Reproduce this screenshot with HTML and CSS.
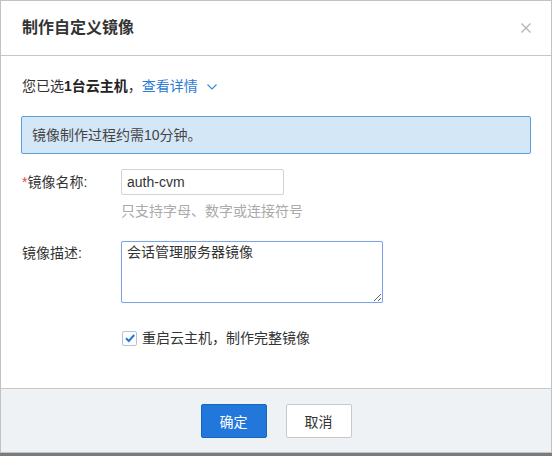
FILE: index.html
```html
<!DOCTYPE html>
<html lang="zh-CN">
<head>
<meta charset="utf-8">
<title>制作自定义镜像</title>
<link rel="stylesheet" href="styles.css">
</head>
<body>
<div class="dialog">
  <div class="header">
    <h1 class="title">制作自定义镜像</h1>
    <span class="close" aria-label="关闭">
      <svg width="10" height="10" viewBox="0 0 10 10"><path d="M0.5 0.5 L9.5 9.5 M9.5 0.5 L0.5 9.5" stroke="#aeb4ba" stroke-width="1.3" fill="none"/></svg>
    </span>
  </div>
  <div class="body">
    <p class="selected">您已选<b>1台云主机</b>，<a class="link">查看详情</a><svg class="chev" width="10" height="6" viewBox="0 0 10 6"><path d="M0.5 0.5 L5 5 L9.5 0.5" stroke="#3a87dd" stroke-width="1.1" fill="none"/></svg></p>
    <div class="notice">镜像制作过程约需10分钟。</div>
    <div class="row first">
      <label class="label"><span class="req">*</span>镜像名称:</label>
      <div class="field">
        <input class="input" type="text" value="auth-cvm">
        <div class="hint">只支持字母、数字或连接符号</div>
      </div>
    </div>
    <div class="row second">
      <label class="label tall">镜像描述:</label>
      <div class="field">
        <textarea class="textarea">会话管理服务器镜像</textarea>
      </div>
    </div>
    <div class="check-row">
      <span class="checkbox"><svg width="12" height="12" viewBox="0 0 12 12"><path d="M2 6.2 L4.8 9 L10.2 3" stroke="#1f78d8" stroke-width="2" fill="none"/></svg></span>
      <span class="check-label">重启云主机，制作完整镜像</span>
    </div>
  </div>
  <div class="footer">
    <button class="btn primary">确定</button>
    <button class="btn">取消</button>
  </div>
</div>
</body>
</html>
```
FILE: styles.css
```css
* { box-sizing: border-box; }
html, body { margin: 0; padding: 0; }
body {
  width: 552px;
  height: 456px;
  background: #7b7b7b;
  font-family: "Liberation Sans", "Noto Sans CJK SC", sans-serif;
  font-size: 14px;
  color: #333;
}
.dialog {
  width: 552px;
  height: 453px;
  background: #fff;
  border: 1px solid #c2c2c2;
  display: flex;
  flex-direction: column;
}
.header {
  height: 55px;
  border-bottom: 1px solid #c6c6c6;
  display: flex;
  align-items: center;
  justify-content: space-between;
  padding: 0 20px 0 21px;
}
.title {
  margin: 0;
  font-size: 16px;
  font-weight: bold;
  line-height: 22px;
  color: #333;
}
.close { display: flex; }
.body {
  flex: 1;
  padding: 20px 20px 0 20px;
}
.selected {
  margin: 0 0 0 1px;
  line-height: 20px;
  display: flex;
  align-items: center;
}
.selected b { font-weight: bold; color: #222; }
.link { color: #2b7bd6; text-decoration: none; }
.chev { margin-left: 9px; margin-top: 1px; }
.notice {
  margin-top: 20px;
  height: 38px;
  border: 1px solid #5c9ddb;
  border-radius: 2px;
  background: #d4e7f7;
  padding: 8px 10px;
  line-height: 20px;
  color: #444;
}
.row {
  display: grid;
  grid-template-columns: 100px 1fr;
}
.row.first { margin-top: 15px; }
.row.second { margin-top: 20px; }
.label {
  line-height: 26px;
  padding-left: 1px;
  color: #333;
}
.label.tall { line-height: 24px; }
.req { color: #e8483a; }
.field { display: flex; flex-direction: column; align-items: flex-start; }
.input {
  width: 163px;
  height: 26px;
  border: 1px solid #d3d3d3;
  border-radius: 2px;
  padding: 0 5px;
  font: inherit;
  font-size: 14px;
  color: #333;
  outline: none;
}
.hint {
  margin-top: 6px;
  line-height: 20px;
  color: #aaa;
}
.textarea {
  width: 262px;
  height: 62px;
  border: 1px solid #7ea4e6;
  border-radius: 2px;
  padding: 1px 5px;
  font: inherit;
  font-size: 14px;
  line-height: 18px;
  color: #333;
  resize: both;
  outline: none;
  box-shadow: 0 0 1px rgba(80,130,220,0.4);
}
.check-row {
  margin-top: 25px;
  margin-left: 101px;
  display: flex;
  align-items: center;
  line-height: 20px;
}
.checkbox {
  width: 15px;
  height: 15px;
  border: 1px solid #b9c3cd;
  border-radius: 2px;
  background: #fff;
  display: flex;
  align-items: center;
  justify-content: center;
}
.check-label { margin-left: 5px; color: #333; }
.footer {
  height: 64px;
  border-top: 1px solid #c8c8c8;
  background: #eff2f5;
  display: flex;
  align-items: center;
  justify-content: center;
  gap: 19px;
}
.btn {
  width: 66px;
  height: 34px;
  border: 1px solid #c6c9cd;
  border-radius: 2px;
  background: #fff;
  color: #333;
  font: inherit;
  font-size: 14px;
  padding: 0;
}
.btn.primary {
  background: #2277da;
  border-color: #1666bf;
  color: #fff;
}
```
